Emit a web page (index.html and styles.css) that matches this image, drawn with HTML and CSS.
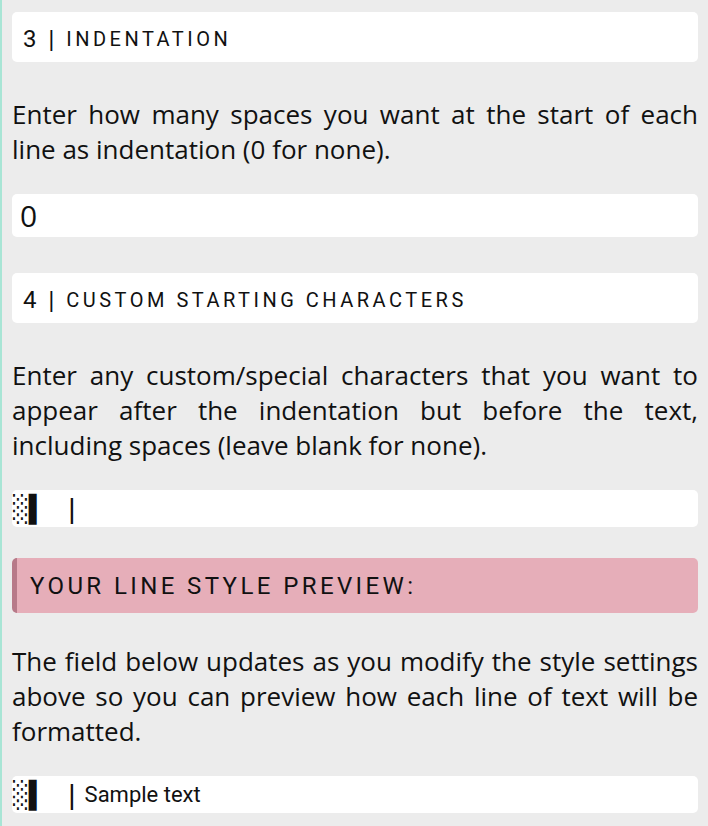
FILE: index.html
```html
<!DOCTYPE html>
<html>
<head>
<meta charset="utf-8">
<link rel="stylesheet" href="styles.css">
</head>
<body>
<main class="page">
  <div class="card"><span class="num">3</span><span class="sep">|</span><span class="label">INDENTATION</span></div>
  <p class="desc">Enter how many spaces you want at the start of each line as indentation (0 for none).</p>
  <div class="field field-big">0</div>
  <div class="card"><span class="num">4</span><span class="sep">|</span><span class="label">CUSTOM STARTING CHARACTERS</span></div>
  <p class="desc">Enter any custom/special characters that you want to appear after the indentation but before the text, including spaces (leave blank for none).</p>
  <div class="field field-chars"><span class="blocks">░▌</span><span class="bar">|</span></div>
  <div class="banner">YOUR LINE STYLE PREVIEW:</div>
  <p class="desc desc-3">The field below updates as you modify the style settings above so you can preview how each line of text will be formatted.</p>
  <div class="field field-chars"><span class="blocks">░▌</span><span class="bar">|</span><span class="sample">Sample text</span></div>
</main>
</body>
</html>
```

FILE: styles.css
```css
html, body {
  margin: 0;
  padding: 0;
  background: #ececec;
  height: 100%;
}
body {
  border-left: 2px solid #a8e5d5;
  box-sizing: border-box;
}
.page {
  display: flex;
  flex-direction: column;
  padding: 12px 10px 0 10px;
}
.card {
  background: #fff;
  border-radius: 5px;
  height: 50px;
  box-sizing: border-box;
  display: flex;
  align-items: center;
  padding-left: 11px;
  padding-top: 3px;
  font-family: Roboto, sans-serif;
  color: #111;
}
.num {
  font-size: 24px;
}
.sep {
  font-family: "Liberation Sans", sans-serif;
  font-size: 22px;
  margin: 0 12px 0 12px;
}
.label {
  font-size: 20px;
  letter-spacing: 3.5px;
}
.desc {
  margin: 35px 0 27px 0;
  font-family: "Open Sans", sans-serif;
  font-size: 26px;
  line-height: 35px;
  text-align: justify;
  color: #111;
}
.desc-3 {
  margin-top: 31px;
}
.field {
  background: #fff;
  border-radius: 5px;
  display: flex;
  align-items: center;
  color: #111;
}
.field-big {
  height: 43px;
  padding-left: 8px;
  font-family: "Open Sans", sans-serif;
  font-size: 30px;
  margin-bottom: 36px;
}
.field-chars {
  height: 37px;
  padding-left: 1px;
}
.blocks {
  font-family: "DejaVu Sans Mono", monospace;
  font-size: 26px;
  line-height: 1;
}
.bar {
  font-family: "Liberation Sans", sans-serif;
  font-size: 28px;
  line-height: 1;
  margin-left: 24px;
}
.sample {
  font-family: Roboto, sans-serif;
  font-size: 22px;
  margin-left: 9px;
}
.banner {
  margin-top: 31px;
  height: 55px;
  box-sizing: border-box;
  background: #e6aeb9;
  border-left: 5px solid #b77a89;
  border-radius: 5px;
  display: flex;
  align-items: center;
  padding-left: 13px;
  font-family: Roboto, sans-serif;
  font-size: 24px;
  letter-spacing: 3.4px;
  color: #111;
}
```
